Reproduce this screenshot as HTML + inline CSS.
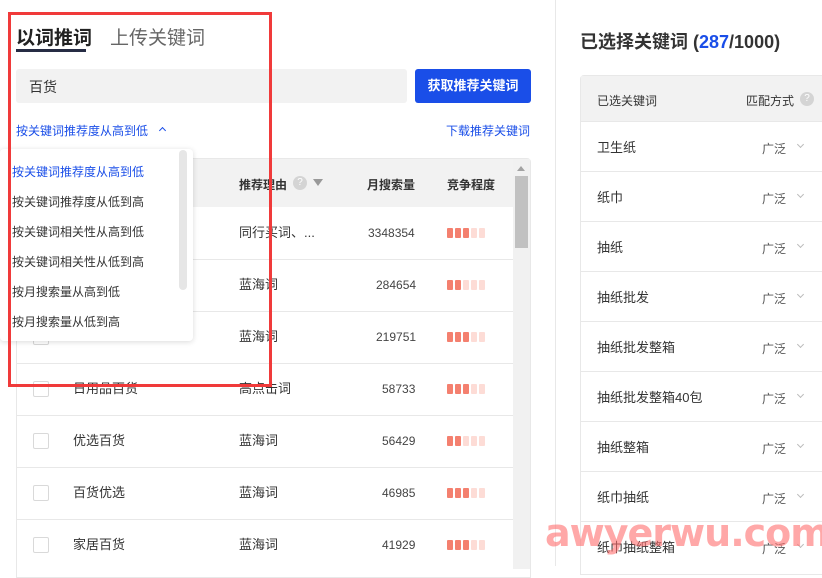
<!DOCTYPE html><html><head><meta charset="utf-8"><style>
*{margin:0;padding:0;box-sizing:border-box}
body{width:822px;height:566px;overflow:hidden;background:#fff;font-family:"Liberation Sans","Noto Sans CJK SC",sans-serif;color:#333;position:relative}
.a{position:absolute;white-space:nowrap}
.bar{position:absolute;width:44px;height:10px}
.bar i{float:left;width:6px;height:10px;margin-right:2px;background:#fddcd6;border-radius:1px}
.bar i.d{background:#f4806f}
.cb{position:absolute;left:33px;width:16px;height:16px;border:1px solid #d9d9d9;border-radius:2px;background:#fff}
.hl{position:absolute;height:1px;background:#e8e8e8}
.chev{position:absolute;width:5px;height:5px;border-right:1px solid #bbb;border-bottom:1px solid #bbb;transform:rotate(45deg)}
</style></head><body>
<div class="a" style="left:16px;top:23px;font-size:19px;font-weight:bold;color:#222">以词推词</div>
<div class="a" style="left:16px;top:49px;width:70px;height:3px;background:#262c44"></div>
<div class="a" style="left:110px;top:23px;font-size:19px;color:#666">上传关键词</div>
<div class="a" style="left:16px;top:69px;width:391px;height:34px;background:#f2f2f2;border-radius:3px"></div>
<div class="a" style="left:29px;top:77px;font-size:14px;color:#333">百货</div>
<div class="a" style="left:415px;top:69px;width:116px;height:34px;background:#1a4ee8;border-radius:3px;color:#fff;font-size:13px;line-height:34px;text-align:center;font-weight:bold">获取推荐关键词</div>
<div class="a" style="left:16px;top:122px;font-size:12px;color:#1a4ee8">按关键词推荐度从高到低</div>
<div class="a" style="left:160px;top:128px;width:5px;height:5px;border-left:1px solid #1a4ee8;border-top:1px solid #1a4ee8;transform:rotate(45deg)"></div>
<div class="a" style="left:446px;top:122px;font-size:12px;color:#1a4ee8">下载推荐关键词</div>

<div class="a" style="left:16px;top:158px;width:515px;height:420px;border:1px solid #e8e8e8;border-radius:4px 4px 0 0"></div>
<div class="a" style="left:17px;top:159px;width:497px;height:48px;background:#f2f2f2"></div>
<div class="a" style="left:239px;top:176px;font-size:12px;font-weight:bold;color:#333">推荐理由</div>
<div class="a" style="left:293px;top:176px;width:14px;height:14px;border-radius:50%;background:#d4d4d4;color:#fff;font-size:10px;text-align:center;line-height:14px">?</div>
<div class="a" style="left:313px;top:179px;width:0;height:0;border-left:5px solid transparent;border-right:5px solid transparent;border-top:7px solid #999"></div>
<div class="a" style="left:367px;top:176px;font-size:12px;font-weight:bold">月搜索量</div>
<div class="a" style="left:447px;top:176px;font-size:12px;font-weight:bold">竞争程度</div>
<div class="a" style="left:513px;top:159px;width:17px;height:410px;background:#f1f1f1"></div>
<div class="a" style="left:515px;top:176px;width:13px;height:72px;background:#c1c1c1"></div>
<div class="a" style="left:517px;top:166px;width:0;height:0;border-left:4px solid transparent;border-right:4px solid transparent;border-bottom:5px solid #a3a3a3"></div>

<div class="hl" style="left:17px;top:259px;width:496px"></div>
<div class="hl" style="left:17px;top:311px;width:496px"></div>
<div class="hl" style="left:17px;top:363px;width:496px"></div>
<div class="hl" style="left:17px;top:415px;width:496px"></div>
<div class="hl" style="left:17px;top:467px;width:496px"></div>
<div class="hl" style="left:17px;top:519px;width:496px"></div>

<div class="a" style="left:239px;top:222px;font-size:13px">同行买词、...</div>
<div class="a" style="left:368px;top:226px;font-size:12px;color:#444">3348354</div>
<div class="bar" style="left:447px;top:228px"><i class="d"></i><i class="d"></i><i class="d"></i><i></i><i></i></div>
<div class="a" style="left:239px;top:274px;font-size:13px">蓝海词</div>
<div class="a" style="left:376px;top:278px;font-size:12px;color:#444">284654</div>
<div class="bar" style="left:447px;top:280px"><i class="d"></i><i class="d"></i><i></i><i></i><i></i></div>
<div class="cb" style="top:329px"></div>
<div class="a" style="left:239px;top:326px;font-size:13px">蓝海词</div>
<div class="a" style="left:376px;top:330px;font-size:12px;color:#444">219751</div>
<div class="bar" style="left:447px;top:332px"><i class="d"></i><i class="d"></i><i class="d"></i><i></i><i></i></div>
<div class="cb" style="top:381px"></div>
<div class="a" style="left:73px;top:378px;font-size:13px">日用品百货</div>
<div class="a" style="left:239px;top:378px;font-size:13px">高点击词</div>
<div class="a" style="left:382px;top:382px;font-size:12px;color:#444">58733</div>
<div class="bar" style="left:447px;top:384px"><i class="d"></i><i class="d"></i><i class="d"></i><i></i><i></i></div>
<div class="cb" style="top:433px"></div>
<div class="a" style="left:73px;top:430px;font-size:13px">优选百货</div>
<div class="a" style="left:239px;top:430px;font-size:13px">蓝海词</div>
<div class="a" style="left:382px;top:434px;font-size:12px;color:#444">56429</div>
<div class="bar" style="left:447px;top:436px"><i class="d"></i><i class="d"></i><i></i><i></i><i></i></div>
<div class="cb" style="top:485px"></div>
<div class="a" style="left:73px;top:482px;font-size:13px">百货优选</div>
<div class="a" style="left:239px;top:482px;font-size:13px">蓝海词</div>
<div class="a" style="left:382px;top:486px;font-size:12px;color:#444">46985</div>
<div class="bar" style="left:447px;top:488px"><i class="d"></i><i class="d"></i><i class="d"></i><i></i><i></i></div>
<div class="cb" style="top:537px"></div>
<div class="a" style="left:73px;top:534px;font-size:13px">家居百货</div>
<div class="a" style="left:239px;top:534px;font-size:13px">蓝海词</div>
<div class="a" style="left:382px;top:538px;font-size:12px;color:#444">41929</div>
<div class="bar" style="left:447px;top:540px"><i class="d"></i><i class="d"></i><i class="d"></i><i></i><i></i></div>

<div class="a" style="left:0;top:149px;width:193px;height:192px;background:#fff;border-radius:4px;box-shadow:0 1px 6px rgba(0,0,0,.15)"></div>
<div class="a" style="left:179px;top:150px;width:8px;height:140px;background:#e6e6e6;border-radius:4px"></div>
<div class="a" style="left:12px;top:163px;font-size:12px;color:#1a4ee8">按关键词推荐度从高到低</div>
<div class="a" style="left:12px;top:193px;font-size:12px;color:#333">按关键词推荐度从低到高</div>
<div class="a" style="left:12px;top:223px;font-size:12px;color:#333">按关键词相关性从高到低</div>
<div class="a" style="left:12px;top:253px;font-size:12px;color:#333">按关键词相关性从低到高</div>
<div class="a" style="left:12px;top:283px;font-size:12px;color:#333">按月搜索量从高到低</div>
<div class="a" style="left:12px;top:313px;font-size:12px;color:#333">按月搜索量从低到高</div>

<div class="a" style="left:8px;top:12px;width:264px;height:375px;border:3px solid #f03a3a"></div>

<div class="a" style="left:555px;top:0;width:1px;height:566px;background:#e8e8e8"></div>

<div class="a" style="left:580px;top:28px;font-size:18px;font-weight:bold;color:#333">已选择关键词 (<span style="color:#1a4ee8">287</span>/1000)</div>
<div class="a" style="left:580px;top:75px;width:260px;height:500px;border:1px solid #e8e8e8;border-radius:4px 0 0 0"></div>
<div class="a" style="left:581px;top:76px;width:241px;height:46px;background:#f2f2f2"></div>
<div class="a" style="left:597px;top:92px;font-size:12px;color:#333">已选关键词</div>
<div class="a" style="left:746px;top:92px;font-size:12px;color:#333">匹配方式</div>
<div class="a" style="left:800px;top:92px;width:14px;height:14px;border-radius:50%;background:#d4d4d4;color:#fff;font-size:10px;text-align:center;line-height:14px">?</div>

<div class="hl" style="left:581px;top:121px;width:241px"></div>
<div class="hl" style="left:581px;top:171px;width:241px"></div>
<div class="hl" style="left:581px;top:221px;width:241px"></div>
<div class="hl" style="left:581px;top:271px;width:241px"></div>
<div class="hl" style="left:581px;top:321px;width:241px"></div>
<div class="hl" style="left:581px;top:371px;width:241px"></div>
<div class="hl" style="left:581px;top:421px;width:241px"></div>
<div class="hl" style="left:581px;top:471px;width:241px"></div>
<div class="hl" style="left:581px;top:521px;width:241px"></div>

<div class="a" style="left:597px;top:137px;font-size:13px">卫生纸</div>
<div class="a" style="left:597px;top:187px;font-size:13px">纸巾</div>
<div class="a" style="left:597px;top:237px;font-size:13px">抽纸</div>
<div class="a" style="left:597px;top:287px;font-size:13px">抽纸批发</div>
<div class="a" style="left:597px;top:337px;font-size:13px">抽纸批发整箱</div>
<div class="a" style="left:597px;top:387px;font-size:13px">抽纸批发整箱40包</div>
<div class="a" style="left:597px;top:437px;font-size:13px">抽纸整箱</div>
<div class="a" style="left:597px;top:487px;font-size:13px">纸巾抽纸</div>
<div class="a" style="left:597px;top:537px;font-size:13px">纸巾抽纸整箱</div>

<div class="a" style="left:762px;top:140px;font-size:12px;color:#555">广泛</div><div class="chev" style="left:798px;top:142px"></div>
<div class="a" style="left:762px;top:190px;font-size:12px;color:#555">广泛</div><div class="chev" style="left:798px;top:192px"></div>
<div class="a" style="left:762px;top:240px;font-size:12px;color:#555">广泛</div><div class="chev" style="left:798px;top:242px"></div>
<div class="a" style="left:762px;top:290px;font-size:12px;color:#555">广泛</div><div class="chev" style="left:798px;top:292px"></div>
<div class="a" style="left:762px;top:340px;font-size:12px;color:#555">广泛</div><div class="chev" style="left:798px;top:342px"></div>
<div class="a" style="left:762px;top:390px;font-size:12px;color:#555">广泛</div><div class="chev" style="left:798px;top:392px"></div>
<div class="a" style="left:762px;top:440px;font-size:12px;color:#555">广泛</div><div class="chev" style="left:798px;top:442px"></div>
<div class="a" style="left:762px;top:490px;font-size:12px;color:#555">广泛</div><div class="chev" style="left:798px;top:492px"></div>
<div class="a" style="left:762px;top:540px;font-size:12px;color:#555">广泛</div><div class="chev" style="left:798px;top:542px"></div>

<div class="a" style="left:545px;top:511px;font-size:38px;font-weight:bold;font-family:'DejaVu Sans',sans-serif;color:rgba(255,110,110,.6);letter-spacing:-1px">awyerwu.com</div>
</body></html>
